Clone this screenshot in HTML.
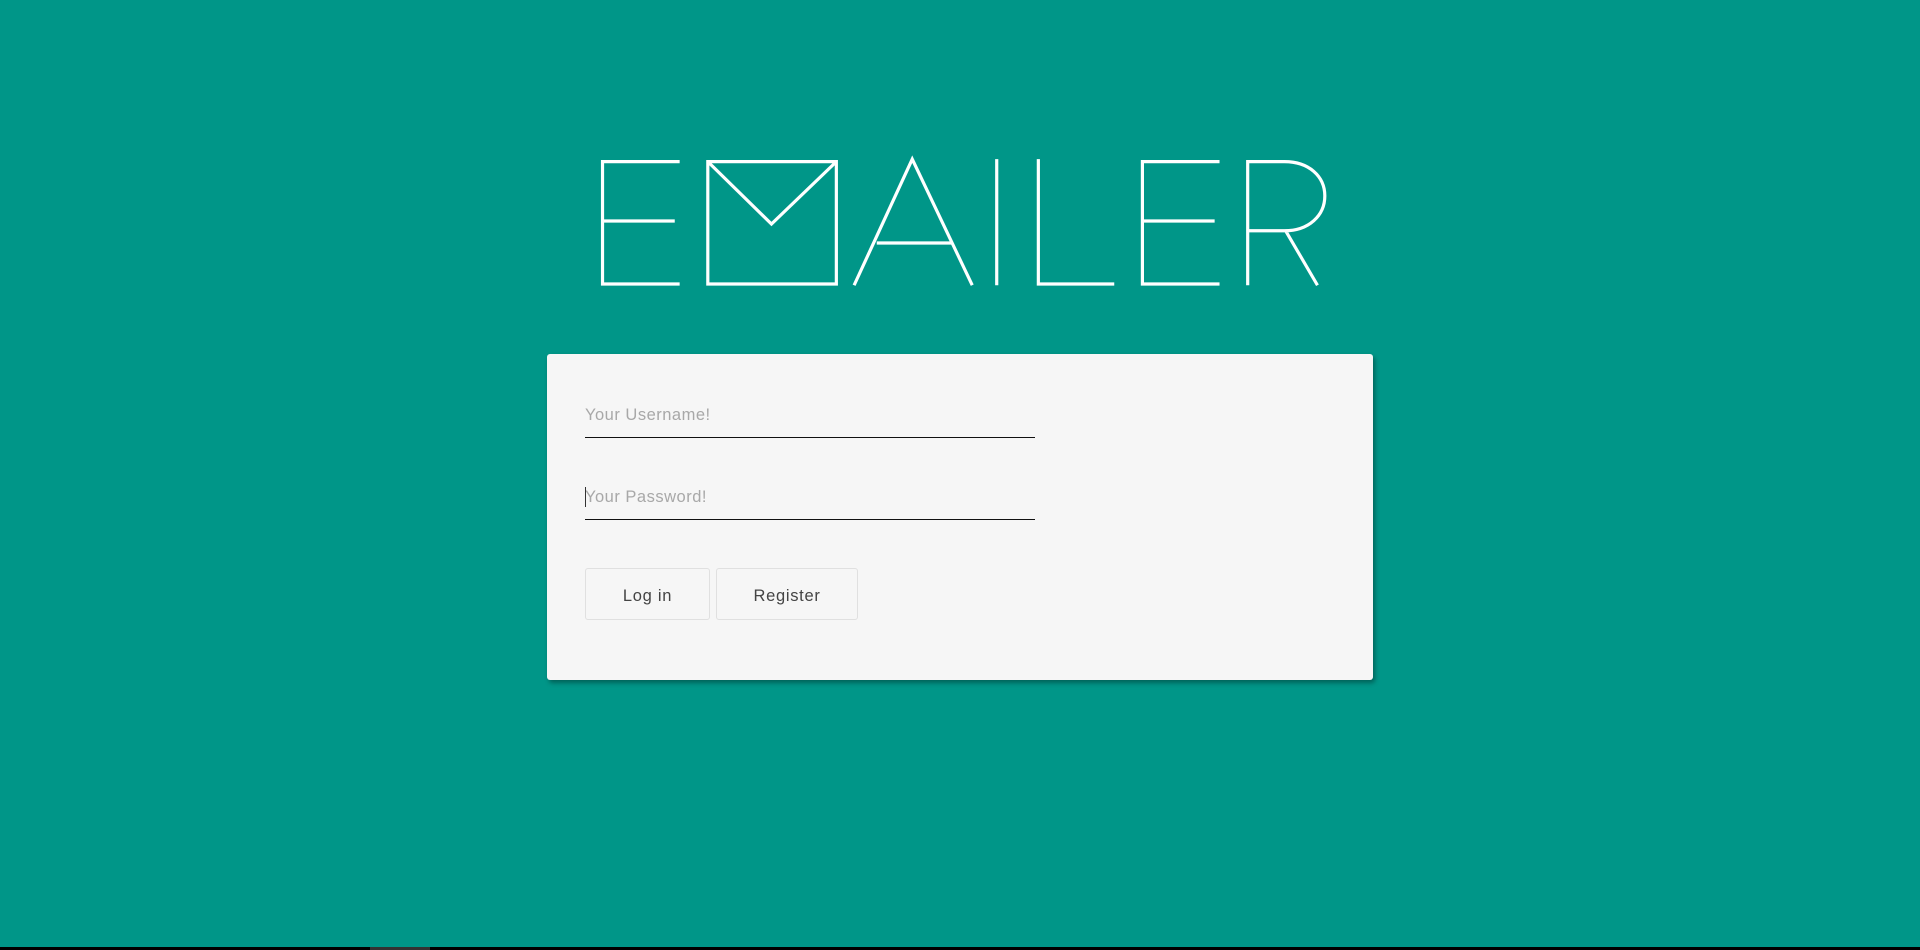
<!DOCTYPE html>
<html><head><meta charset="utf-8"><style>
html,body{margin:0;padding:0;width:1920px;height:950px;overflow:hidden;background:#009688;font-family:"Liberation Sans",sans-serif;}
#logo{position:absolute;left:0;top:0;}
.card{position:absolute;left:547px;top:354px;width:826px;height:326px;background:#f6f6f6;border-radius:3px;box-shadow:2px 3px 5px rgba(0,0,0,0.35);}
.inp{position:absolute;left:38px;width:450px;border-bottom:1.5px solid #111;height:38px;}
.inp span{position:absolute;left:0;bottom:12px;font-size:16.5px;color:#a8a8a8;letter-spacing:0.5px;}
.btn{position:absolute;top:214px;height:52px;border:1px solid #e0e0e0;border-radius:3px;box-sizing:border-box;text-align:center;line-height:54px;font-size:16.5px;color:#444;letter-spacing:0.7px;background:#f6f6f6;}
.caret{position:absolute;left:0;bottom:12px;width:1px;height:20px;background:#333;}
.bar{position:absolute;left:0;top:947px;width:1920px;height:3px;background:#000;}
.bar2{position:absolute;left:370px;top:947px;width:60px;height:3px;background:#333;}
</style></head><body>
<svg id="logo" width="1920" height="950" viewBox="0 0 1568 776" fill="none" stroke="#fff" stroke-width="2.6">
<path d="M555 132H492V232H555M492 180.5H551"/>
<path d="M578 132H683V232H578ZM578 132L630 183L683 132"/>
<path d="M697.5 233L745 130L794 233M716 198.5H777"/>
<path d="M814 130V233"/>
<path d="M848 130V232H910"/>
<path d="M996 132H933V232H996M933 180.5H992"/>
<path d="M1019 233V132H1049C1069 132 1082 144 1082 160C1082 176 1069 188.5 1049 188.5H1019M1050 188.5L1076 233"/>
</svg>
<div class="card">
 <div class="inp" style="top:45px"><span>Your Username!</span></div>
 <div class="inp" style="top:127px"><span>Your Password!</span><div class="caret"></div></div>
 <div class="btn" style="left:38px;width:125px">Log in</div>
 <div class="btn" style="left:169px;width:142px">Register</div>
</div>
<div class="bar"></div><div class="bar2"></div>
</body></html>
